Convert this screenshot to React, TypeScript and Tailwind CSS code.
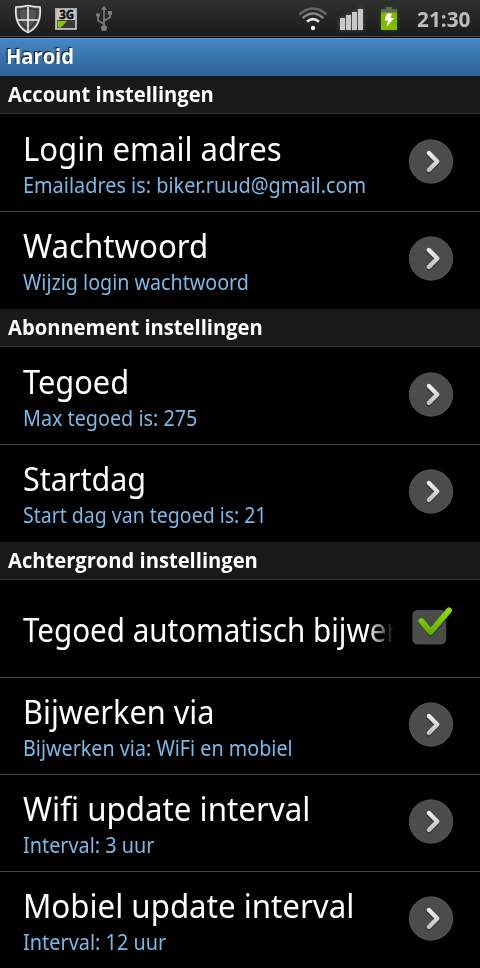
import React from "react";

type Item = { title: string; scale: string; summary?: string; summaryScale?: string; checked?: boolean };
type Section = { name: string; items: Item[] };

const sections: Section[] = [
  {
    name: "Account instellingen",
    items: [
      { title: "Login email adres", scale: "scale-x-[0.941]", summary: "Emailadres is: biker.ruud@gmail.com", summaryScale: "scale-x-[0.924]" },
      { title: "Wachtwoord", scale: "scale-x-[0.946]", summary: "Wijzig login wachtwoord", summaryScale: "scale-x-[0.916]" },
    ],
  },
  {
    name: "Abonnement instellingen",
    items: [
      { title: "Tegoed", scale: "scale-x-[0.932]", summary: "Max tegoed is: 275", summaryScale: "scale-x-[0.919]" },
      { title: "Startdag", scale: "scale-x-[0.924]", summary: "Start dag van tegoed is: 21", summaryScale: "scale-x-[0.907]" },
    ],
  },
  {
    name: "Achtergrond instellingen",
    items: [
      { title: "Tegoed automatisch bijwerken", scale: "scale-x-[0.896]", checked: true },
      { title: "Bijwerken via", scale: "scale-x-[0.931]", summary: "Bijwerken via: WiFi en mobiel", summaryScale: "scale-x-[0.918]" },
      { title: "Wifi update interval", scale: "scale-x-[0.948]", summary: "Interval: 3 uur", summaryScale: "scale-x-[0.922]" },
      { title: "Mobiel update interval", scale: "scale-x-[0.947]", summary: "Interval: 12 uur", summaryScale: "scale-x-[0.925]" },
    ],
  },
];

function StatusBar() {
  return (
    <div className="flex h-[38px] items-start border-b border-black bg-linear-to-b from-[#303030] to-[#1b1b1b] shadow-[inset_0_-1px_0_#4a4a4a]">
      <svg className="ml-[14px] mt-1 h-[30px] w-7 shrink-0" viewBox="0 0 28 30">
        <path d="M2 3Q8 3 14 1.5Q20 3 26 3Q28 22 14 28.5Q0 22 2 3Z" fill="#555" stroke="#e8e8e8" strokeWidth="1.7" />
        <path d="M5 5.5Q10 5.5 14 4Q18 5.5 23 5.5Q24 20 14 25Q4 20 5 5.5Z" fill="none" stroke="#333" strokeWidth="1.2" />
        <path d="M14 3V27M4 16H24" stroke="#f0f0f0" strokeWidth="1.6" />
      </svg>
      <svg className="ml-[13px] mt-2 h-[22px] w-[22px] shrink-0" viewBox="0 0 22 22">
        <rect x=".75" y=".75" width="20.5" height="20.5" fill="#c9c9c9" stroke="#aaa" strokeWidth="1.5" />
        <rect x="2" y="12" width="18" height="8" fill="#3a3a3a" />
        <path d="M2.5 13H12L6 19.5H2.5Z" fill="#8ec400" />
        <text x="4.2" y="10.5" fontSize="11.5" fontWeight="700" fontFamily="Open Sans, sans-serif" textLength="15" fill="#111" stroke="#111" strokeWidth=".5">3G</text>
      </svg>
      <svg className="ml-[18px] mt-[5px] h-[27px] w-[18px] shrink-0" viewBox="0 0 18 27" fill="none" stroke="#7b7b7b" strokeWidth="1.7">
        <path d="M9 4V22M9 19L3 15.5V11M9 16L15 12.5V9" />
        <path d="M9 .8L12 5H6Z" fill="#7b7b7b" stroke="none" />
        <circle cx="9" cy="23" r="3.1" fill="#7b7b7b" stroke="none" />
        <circle cx="3" cy="10" r="2" fill="#7b7b7b" stroke="none" />
        <rect x="13" y="6" width="4" height="4" fill="#7b7b7b" stroke="none" />
      </svg>
      <svg className="ml-auto mt-1.5 h-[26px] w-[30px] shrink-0" viewBox="0 0 30 26" fill="none" strokeWidth="2.5">
        <path d="M1.5 8.5Q15-3.5 28.5 8.5" stroke="#666" />
        <path d="M4.8 12Q15 3 25.2 12" stroke="#888" />
        <path d="M9 15.8Q15 10.5 21 15.8" stroke="#e5e5e5" />
        <circle cx="15" cy="22" r="2.2" fill="#eee" />
      </svg>
      <svg className="ml-3 mt-[9px] h-[21px] w-6 shrink-0 drop-shadow-[0_0_2px_#555]" viewBox="0 0 24 21" fill="#c9c9c9">
        <rect y="9" width="5" height="12" />
        <rect x="6" y="6" width="5" height="15" />
        <rect x="12" y="3" width="5" height="18" />
        <rect x="18" width="5" height="21" />
      </svg>
      <svg className="ml-[17px] mt-[7px] h-[23px] w-4 shrink-0 drop-shadow-[0_0_2px_#344d00]" viewBox="0 0 16 23">
        <path d="M5 0H11V2H16V6H0V2H5Z" fill="#5f6460" />
        <rect y="5.5" width="16" height="17.5" fill="#83b800" />
        <path d="M6 6.5H11L9.5 11H13L5.5 20L7 13.5H3.5Z" fill="#fff" />
      </svg>
      <div className="ml-[20px] w-[63px] pt-[4px] text-[21px] leading-[30px] font-bold text-[#bcbcbc]">
        <span className="inline-block origin-left scale-x-[0.99]">21:30</span>
      </div>
    </div>
  );
}

function Arrow() {
  return (
    <svg className="h-[46px] w-[46px]" viewBox="0 0 46 46">
      <circle cx="23" cy="23.5" r="22" fill="#4b4d4a" />
      <circle cx="23" cy="23.5" r="21.6" fill="none" stroke="#565656" strokeWidth=".7" />
      <path d="M20.7 15.2L29.2 23.8L20.7 32" transform="translate(0 1)" fill="none" stroke="#222" strokeWidth="5" strokeLinecap="round" strokeLinejoin="round" opacity=".6" />
      <path d="M20.9 15L29.3 23.5L20.9 32" fill="none" stroke="url(#arrowFill)" strokeWidth="4.4" strokeLinecap="round" strokeLinejoin="round" />
      <defs>
        <linearGradient id="arrowFill" x1="0" y1="12" x2="0" y2="34" gradientUnits="userSpaceOnUse">
          <stop stopColor="#f5f5f5" />
          <stop offset="1" stopColor="#bdbdbd" />
        </linearGradient>
      </defs>
    </svg>
  );
}

function Check() {
  return (
    <svg className="h-[46px] w-[46px]" viewBox="0 0 46 46">
      <defs>
        <linearGradient id="checkFill" x1="0" y1="4" x2="0" y2="32" gradientUnits="userSpaceOnUse">
          <stop stopColor="#91e010" />
          <stop offset="1" stopColor="#62a800" />
        </linearGradient>
      </defs>
      <rect x="4.8" y="6.5" width="33" height="33.5" rx="4.5" fill="#4b4d4a" stroke="#585858" strokeWidth=".7" />
      <path d="M13.5 17L22.8 28L41 6.5" transform="translate(0 1)" fill="none" stroke="#252525" strokeWidth="6.4" strokeLinecap="round" strokeLinejoin="round" opacity=".6" />
      <path d="M13.3 17L22.7 28L41 6.3" fill="none" stroke="url(#checkFill)" strokeWidth="5.8" strokeLinecap="round" strokeLinejoin="round" />
    </svg>
  );
}

function Row({ item }: { item: Item }) {
  return (
    <div className="flex h-[97px] items-center border-b border-[#444] pl-[23px] font-['Noto_Sans','Open_Sans',sans-serif] last:border-black">
      <div className="w-[370px] overflow-hidden pt-[2px] whitespace-nowrap">
        <div className={`text-[33px] leading-[42px] text-white ${item.summary ? "" : "mask-[linear-gradient(to_right,black_345px,transparent_371px)]"}`}>
          <span className={`-my-[2px] inline-block origin-left align-top leading-[46px] ${item.scale}`}>{item.title}</span>
        </div>
        {item.summary && (
          <div className="text-[21.5px] leading-[30px] text-[#7db8e6]">
            <span className={`inline-block origin-left ${item.summaryScale}`}>{item.summary}</span>
          </div>
        )}
      </div>
      <div className="-mt-1 ml-[15px]">{item.checked ? <Check /> : <Arrow />}</div>
    </div>
  );
}

export default function App() {
  return (
    <div className="h-[968px] w-[480px] overflow-hidden bg-black font-['Open_Sans','Noto_Sans',sans-serif]">
      <StatusBar />
      <div className="h-[38px] bg-linear-to-b from-[#4687c4] to-[#2e6296] pl-[6px] text-[20.5px] leading-[37px] font-bold text-white shadow-[inset_0_1px_0_#5f9bd5] text-shadow-[-1px_-1px_1px_#111]">
        <span className="inline-block origin-left scale-x-[0.98]">Haroid</span>
      </div>
      {sections.map((s) => (
        <section key={s.name}>
          <h2 className="mb-px h-[38px] border-b border-[#333] bg-[#191919] pl-2 text-[20.5px] leading-[37px] font-bold text-white">
            <span className="inline-block origin-left scale-x-[0.983]">{s.name}</span>
          </h2>
          <div>
            {s.items.map((i) => (
              <Row key={i.title} item={i} />
            ))}
          </div>
        </section>
      ))}
    </div>
  );
}
